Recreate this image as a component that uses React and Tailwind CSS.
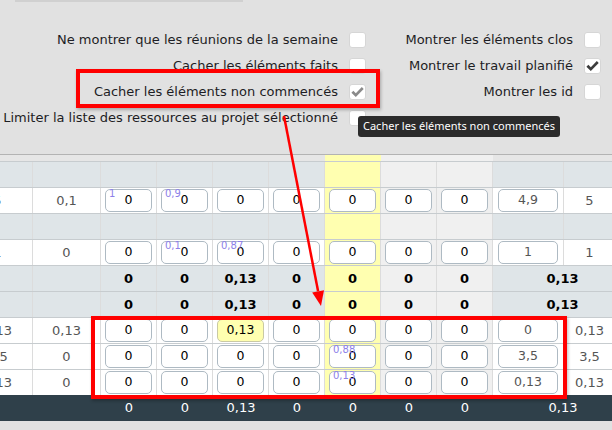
import React from 'react';

const GRID = 'grid grid-cols-[73px_68px_56px_56px_56px_56px_56px_56px_56px_71px_52px]';

const FONT = { fontFamily: '"DejaVu Sans", Verdana, sans-serif' };

// background of the day columns (yellow = today, gray = week-end)
const colBg = (i) => {
  if (i === 4) return 'bg-[#ffffb0]';
  if (i === 5 || i === 6) return 'bg-[#f0f0f0]';
  return '';
};

const rows = [
  { type: 'band' },
  {
    type: 'data', c0: '5', c1: '0,1', wide: '4,9', last: '5',
    cells: [{ v: '0', hint: '1' }, { v: '0', hint: '0,9' }, { v: '0' }, { v: '0' }, { v: '0' }, { v: '0' }, { v: '0' }],
  },
  { type: 'band' },
  {
    type: 'data', c0: '1', c1: '0', wide: '1', last: '1',
    cells: [{ v: '0' }, { v: '0', hint: '0,1' }, { v: '0', hint: '0,87' }, { v: '0' }, { v: '0' }, { v: '0' }, { v: '0' }],
  },
  { type: 'total', vals: ['0', '0', '0,13', '0', '0', '0', '0'], sum: '0,13' },
  { type: 'total', vals: ['0', '0', '0,13', '0', '0', '0', '0'], sum: '0,13' },
  {
    type: 'data', c0: '0,13', c1: '0,13', wide: '0', last: '0,13',
    cells: [{ v: '0' }, { v: '0' }, { v: '0,13', hl: true }, { v: '0' }, { v: '0' }, { v: '0' }, { v: '0' }],
  },
  {
    type: 'data', c0: '3,5', c1: '0', wide: '3,5', last: '3,5',
    cells: [{ v: '0' }, { v: '0' }, { v: '0' }, { v: '0' }, { v: '0', hint: '0,88' }, { v: '0' }, { v: '0' }],
  },
  {
    type: 'data', c0: '0,13', c1: '0', wide: '0,13', last: '0,13',
    cells: [{ v: '0' }, { v: '0' }, { v: '0' }, { v: '0' }, { v: '0', hint: '0,13' }, { v: '0' }, { v: '0' }],
  },
];

const Check = ({ color }) => (
  <svg viewBox="0 0 16 16" className="w-[15px] h-[15px]">
    <path d="M1.5 8.2 L3.6 6.2 L6.2 8.8 L12.6 2.2 L14.6 4.2 L6.2 12.8 Z" fill={color} />
  </svg>
);

const Checkbox = ({ checked, color = '#3a3a3a' }) => (
  <div className="w-[17px] h-[16px] rounded-[3px] bg-white border border-[#d6d6d6] flex items-center justify-center shrink-0">
    {checked && <Check color={color} />}
  </div>
);

const Option = ({ label, checked, color }) => (
  <div className="h-[26px] flex items-center justify-end gap-[11px] whitespace-nowrap">
    <span className="text-[13px] text-[#1d1d24]">{label}</span>
    <Checkbox checked={checked} color={color} />
  </div>
);

const NumInput = ({ v, hint, hl, wide }) => (
  <div
    className={`relative mt-[1px] h-[23px] rounded-[5px] border flex items-center justify-center text-[12.5px] ${
      hl ? 'bg-[#ffffb0] border-[#c9c9a4]' : 'bg-white border-[#aebac3]'
    } ${wide ? 'mx-[5px] text-[#555]' : 'mx-[4px] text-black'}`}
  >
    {hint && <span className="absolute left-[3px] top-[-1px] text-[10px] text-[#8d7fe8] leading-none">{hint}</span>}
    {v}
  </div>
);

const cell = 'h-[25px] border-r border-[#dcdcdc] flex items-center justify-center';

const TableRow = ({ row }) => {
  if (row.type === 'band') {
    return (
      <div className={`${GRID} bg-[#dfe5e8] border-t border-[#c7cccf]`}>
        {Array.from({ length: 11 }).map((_, i) => (
          <div key={i} className={`${cell} ${colBg(i - 2)}`} />
        ))}
      </div>
    );
  }
  if (row.type === 'total') {
    return (
      <div className={`${GRID} bg-[#dfe5e8] border-t border-[#c7cccf] font-bold text-[13px] text-black`}>
        <div className={cell} />
        <div className={cell} />
        {row.vals.map((v, i) => (
          <div key={i} className={`${cell} ${colBg(i)}`}>{v}</div>
        ))}
        <div className={`${cell} col-span-2 pl-[17px]`}>{row.sum}</div>
      </div>
    );
  }
  return (
    <div className={`${GRID} bg-white border-t border-[#c7cccf] text-[13px]`}>
      <div className={`${cell} pl-[3px] text-[#555]`}>{row.c0}</div>
      <div className={`${cell} text-[#555]`}>{row.c1}</div>
      {row.cells.map((c, i) => (
        <div key={i} className={`h-[25px] border-r border-[#dcdcdc] ${colBg(i)}`}>
          <NumInput {...c} />
        </div>
      ))}
      <div className="h-[25px] border-r border-[#dcdcdc]">
        <NumInput v={row.wide} wide />
      </div>
      <div className={`${cell} text-[#555]`}>{row.last}</div>
    </div>
  );
};

export default function App() {
  return (
    <div className="relative w-[612px] h-[430px] overflow-hidden bg-[#e1e1e1]" style={FONT}>
      {/* bottom edge of the panel above */}
      <div className="ml-[15px] w-[228px] h-[2px] bg-[#d0d0d0]" />

      {/* options */}
      <div className="pt-[25px] flex">
        <div className="w-[366px]">
          <Option label="Ne montrer que les réunions de la semaine" />
          <Option label="Cacher les éléments faits" />
          <Option label="Cacher les éléments non commencés" checked color="#8a8a8a" />
          <Option label="Limiter la liste des ressources au projet sélectionné" />
        </div>
        <div className="w-[235px]">
          <Option label="Montrer les éléments clos" />
          <Option label="Montrer le travail planifié" checked color="#3c3c3c" />
          <Option label="Montrer les id" />
        </div>
      </div>

      {/* planning table */}
      <div className="mt-[23px] ml-[-40px] w-[656px] border-t border-[#b3b3b3]">
        <div className={`${GRID} bg-[#e6e6e6]`}>
          {Array.from({ length: 11 }).map((_, i) => (
            <div key={i} className={`h-[6px] ${colBg(i - 2)}`} />
          ))}
        </div>
        {rows.map((r, i) => (
          <TableRow key={i} row={r} />
        ))}
        <div className={`${GRID} bg-[#2f404a] text-white text-[13px]`}>
          <div className="h-[26px]" />
          <div className="h-[26px]" />
          {['0', '0', '0,13', '0', '0', '0', '0'].map((v, i) => (
            <div key={i} className="h-[26px] flex items-center justify-center">{v}</div>
          ))}
          <div className="h-[26px] col-span-2 pl-[17px] flex items-center justify-center">0,13</div>
        </div>
      </div>

      {/* tooltip */}
      <div
        className="absolute left-[358px] top-[116px] h-[21px] px-[5px] rounded-[3px] bg-[#2b2b2b] text-white text-[11px] flex items-center whitespace-nowrap"
        style={{ fontFamily: '"Noto Sans", "Open Sans", sans-serif' }}
      >
        Cacher les éléments non commencés
      </div>

      {/* annotations */}
      <div className="absolute left-[76px] top-[69px] w-[304px] h-[39px] border-4 border-[#ff0000] shadow-[1px_2px_3px_rgba(0,0,0,0.25)] pointer-events-none" />
      <div className="absolute left-[91px] top-[316px] w-[476px] h-[83px] border-4 border-[#ff0000] shadow-[1px_2px_3px_rgba(0,0,0,0.25)] pointer-events-none" />
      <svg className="absolute left-0 top-0 pointer-events-none" width="612" height="430">
        <line x1="284" y1="116" x2="318.1" y2="291.3" stroke="#ff0000" strokeWidth="2.5" />
        <polygon points="321,306 324,290.2 312.2,292.4" fill="#ff0000" />
      </svg>
    </div>
  );
}
